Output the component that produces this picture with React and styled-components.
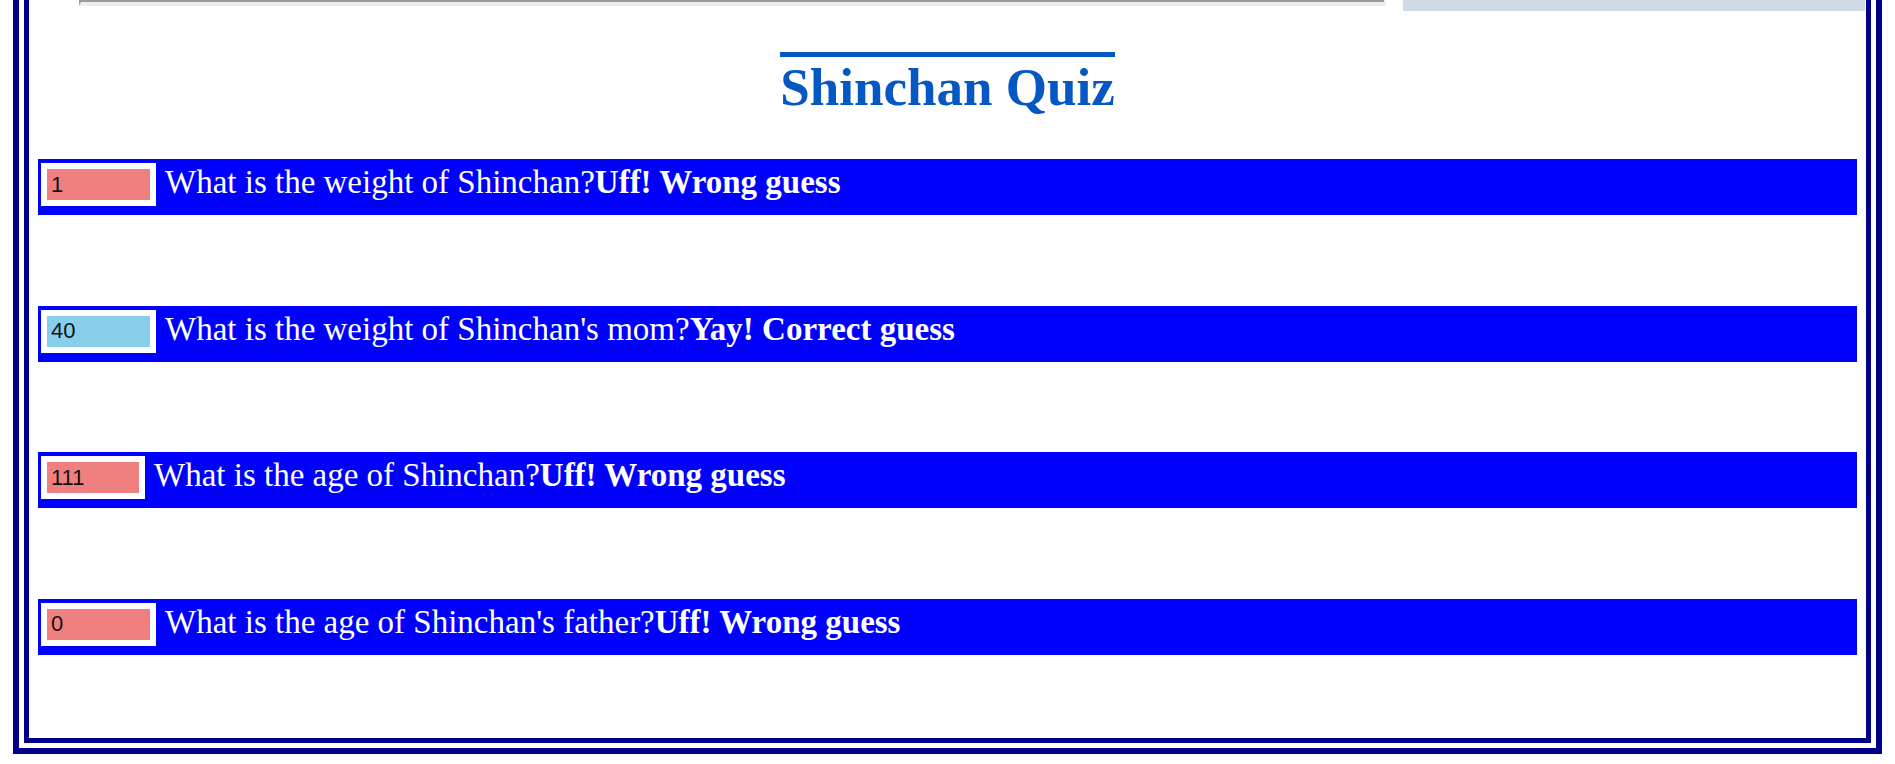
import React from 'react';
import styled, { createGlobalStyle } from 'styled-components';

const GlobalStyle = createGlobalStyle`
  body {
    margin: 0;
    background: #fff;
    font-family: "Liberation Serif", "Times New Roman", serif;
  }
`;

const OuterFrame = styled.div`
  margin: 0 13px 10px;
  padding: 0 5px 5px;
  border: 6px solid #00008b;
  border-top: none;
`;

const InnerFrame = styled.div`
  border: 5px solid #00008b;
  border-top: none;
`;

const TopStrip = styled.div`
  display: flex;
  align-items: flex-start;
  height: 11px;
`;

const InsetEdge = styled.div`
  margin-left: 50px;
  width: 1303px;
  height: 2px;
  background: #9a9a9a;
  border-left: 2px solid #9a9a9a;
  border-right: 2px solid #eeeeee;
  border-bottom: 4px solid #eeeeee;
`;

const SidePanel = styled.div`
  margin-left: 17px;
  width: 462px;
  height: 11px;
  background: #cfdae6;
`;

const TitleRow = styled.div`
  text-align: center;
  margin-top: 41px;
`;

const Title = styled.h1`
  display: inline-block;
  margin: 0;
  border-top: 5px solid #0558c4;
  color: #0558c4;
  font-size: 53px;
  line-height: 61px;
  font-weight: bold;
`;

const QuizList = styled.div`
  display: flex;
  flex-direction: column;
  gap: 90.67px;
  padding: 41px 9px 83px;
`;

const Question = styled.div`
  display: flex;
  align-items: flex-start;
  height: 56px;
  box-sizing: border-box;
  padding: 4px 3px 9px;
  background: #0000ff;
  color: #fff;
  font-size: 33px;
  line-height: 38px;
  white-space: nowrap;
`;

const Answer = styled.input`
  box-sizing: content-box;
  width: ${({ $width }) => $width - 4}px;
  height: 31px;
  padding: 0 0 0 4px;
  margin: 0 9px 0 0;
  border: 6px solid #fff;
  background: ${({ $correct }) => ($correct ? '#87ceeb' : '#f08080')};
  color: #111;
  font-family: "Liberation Sans", Arial, sans-serif;
  font-size: 22px;
  outline: none;
`;

const Verdict = styled.b`
  font-weight: bold;
`;

const questions = [
  { text: 'What is the weight of Shinchan?', value: '1', correct: false, width: 103 },
  { text: "What is the weight of Shinchan's mom?", value: '40', correct: true, width: 103 },
  { text: 'What is the age of Shinchan?', value: '111', correct: false, width: 92 },
  { text: "What is the age of Shinchan's father?", value: '0', correct: false, width: 103 },
];

const App = () => (
  <>
    <GlobalStyle />
    <OuterFrame>
      <InnerFrame>
        <TopStrip>
          <InsetEdge />
          <SidePanel />
        </TopStrip>
        <TitleRow>
          <Title>Shinchan Quiz</Title>
        </TitleRow>
        <QuizList>
          {questions.map((q) => (
            <Question key={q.text}>
              <Answer
                type="text"
                defaultValue={q.value}
                $correct={q.correct}
                $width={q.width}
              />
              <span>
                {q.text}
                <Verdict>{q.correct ? 'Yay! Correct guess' : 'Uff! Wrong guess'}</Verdict>
              </span>
            </Question>
          ))}
        </QuizList>
      </InnerFrame>
    </OuterFrame>
  </>
);

export default App;
